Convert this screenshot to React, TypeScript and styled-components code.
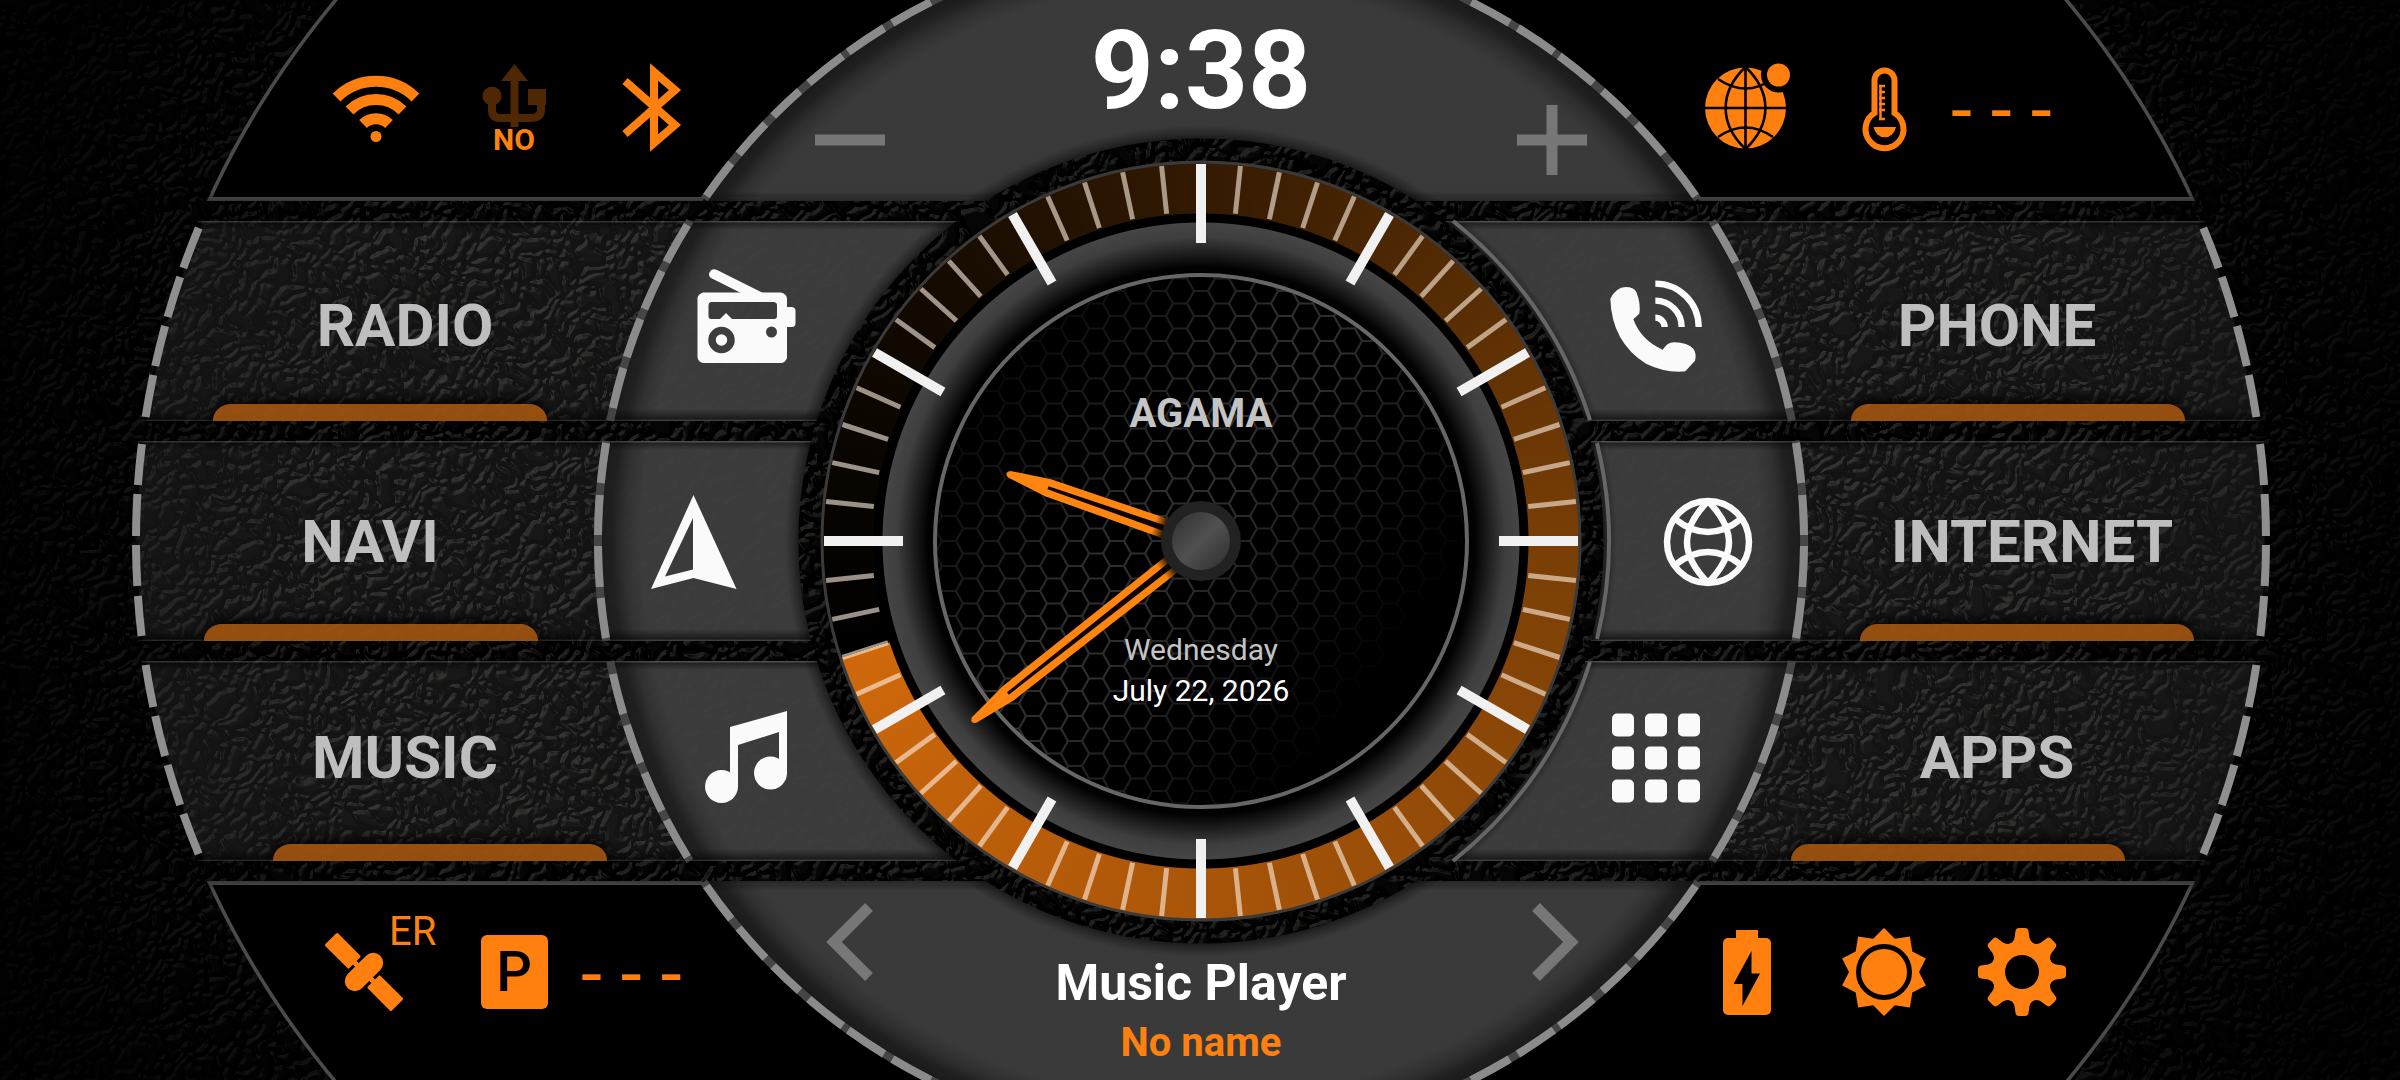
import React from 'react';
import styled, { createGlobalStyle } from 'styled-components';

const ORANGE = '#ff800f';
const SHELL_X = 1069;
const SHELL_Y = 926;
const DISC = 603;

const GlobalStyle = createGlobalStyle`
  * { box-sizing: border-box; }
  body { margin: 0; background: #000; font-family: Roboto, 'Liberation Sans', sans-serif; overflow-x: hidden; }
  button { font: inherit; color: inherit; background: none; border: 0; padding: 0; cursor: pointer; }
  svg { display: block; overflow: visible; }
`;

const Page = styled.main`
  position: relative;
  isolation: isolate;
  overflow: hidden;
  min-height: 100vh;
  padding: 2px 0 0 2px;
  display: grid;
  grid-template-rows: 1fr 200px 200px 200px 1fr;
  grid-template-columns: 100%;
  row-gap: 20px;
`;

const Backdrop = styled.svg`
  position: absolute;
  inset: 0;
  width: 100%;
  height: 100%;
  z-index: -3;
`;

const Vignette = styled.div`
  position: absolute;
  inset: 0;
  z-index: -2;
  background: radial-gradient(1250px 1150px at 50% 50%, transparent 70%, rgba(0, 0, 0, 0.5) 86%, rgba(0, 0, 0, 0.8) 100%);
`;

const Stitching = styled.svg`
  grid-row: 1 / -1;
  grid-column: 1;
  place-self: center;
  pointer-events: none;
`;

/* A horizontal slice of the console; $cy is the console centre measured from the slice's top edge. */
const Band = styled.div<{ $row: number; $cy: string }>`
  grid-row: ${p => p.$row};
  grid-column: 1;
  position: relative;
  &::before {
    content: '';
    position: absolute;
    inset: 0;
    z-index: -1;
    clip-path: ellipse(${SHELL_X}px ${SHELL_Y}px at 50% ${p => p.$cy});
    mask-image: radial-gradient(circle at 50% ${p => p.$cy}, transparent 402px, #000 403px);
  }
`;

const discPaint = (cy: string) => `radial-gradient(circle at 50% ${cy},
  rgba(28, 28, 28, 0.96) 402px, rgba(44, 44, 44, 0.95) 408px, rgba(62, 62, 62, 0.93) 416px,
  rgba(62, 62, 62, 0.93) 560px, rgba(50, 50, 50, 0.94) 576px, rgba(32, 32, 32, 0.95) 589px,
  rgba(27, 27, 27, 0.96) ${DISC}px, transparent ${DISC + 1}px)`;

const StatusBand = styled(Band)<{ $edge: 'top' | 'bottom' }>`
  display: grid;
  grid-template-columns: 368px 1fr 368px;
  padding-inline: calc(50% - 869px);
  &::before {
    top: ${p => (p.$edge === 'bottom' ? '-2px' : 0)};
    background:
      linear-gradient(to ${p => p.$edge}, transparent calc(100% - 10px), rgba(0, 0, 0, 0.4) 100%),
      ${p => discPaint(p.$cy)},
      linear-gradient(to ${p => p.$edge}, transparent calc(100% - 4px), #5a5a5a calc(100% - 4px)),
      radial-gradient(${SHELL_X}px ${SHELL_Y}px at 50% ${p => p.$cy}, #000 99.6%, #4b4b4b 99.7%);
  }
`;

const MenuBand = styled(Band)<{ $reach: number; $label: number; $icon: number }>`
  display: grid;
  grid-template-columns: ${p => p.$label}px ${p => p.$icon}px 1fr ${p => p.$icon}px ${p => p.$label}px;
  padding-inline: calc(50% - ${p => p.$reach}px);
  &::before {
    background:
      linear-gradient(rgba(120, 120, 120, 0.3) 1px, rgba(0, 0, 0, 0.45) 2px, transparent 9px,
        transparent calc(100% - 12px), rgba(0, 0, 0, 0.55) calc(100% - 2px), rgba(110, 110, 110, 0.3) 100%),
      ${p => discPaint(p.$cy)},
      radial-gradient(${SHELL_X}px ${SHELL_Y}px at 50% ${p => p.$cy}, rgba(255, 255, 255, 0.075) 99.4%, transparent 99.6%);
  }
`;

const Cluster = styled.div<{ $top: number }>`
  display: flex;
  align-items: flex-start;
  gap: 50px;
  padding-top: ${p => p.$top}px;
`;

const IconSlot = styled.button`
  position: relative;
  width: 88px;
  height: 88px;
  flex: none;
  display: grid;
  place-items: center;
  color: ${ORANGE};
`;

const Readout = styled.div`
  display: flex;
  align-items: flex-start;
  gap: 23px;
`;

const Dashes = styled.span`
  padding-top: 2px;
  font-size: 76px;
  line-height: 88px;
  white-space: nowrap;
  color: ${ORANGE};
`;

const UsbState = styled.span`
  position: absolute;
  bottom: -4px;
  left: 0;
  width: 100%;
  text-align: center;
  font-size: 30px;
  line-height: 32px;
  font-weight: 700;
`;

const SatCount = styled.span`
  position: absolute;
  left: 57px;
  top: -20px;
  font-size: 40px;
  line-height: 48px;
`;

const ParkBadge = styled.span`
  width: 67px;
  height: 74px;
  border-radius: 6px;
  background: ${ORANGE};
  color: #000;
  font-size: 56px;
  font-weight: 500;
  line-height: 74px;
  text-align: center;
`;

const Hub = styled.div<{ $top: number }>`
  display: grid;
  grid-template-columns: 80px 1fr 80px;
  padding: ${p => p.$top}px 110px 0;
  text-align: center;
`;

const RoundButton = styled.button<{ $drop: number }>`
  width: 80px;
  height: 80px;
  margin-top: ${p => p.$drop}px;
  display: grid;
  place-items: center;
  color: #777;
`;

const Time = styled.time`
  font-size: 110px;
  line-height: 120px;
  font-weight: 700;
  color: #fff;
`;

const Player = styled.div`
  padding-top: 51px;
  line-height: 60px;
  font-weight: 700;
`;

const PlayerTitle = styled.div`
  font-size: 50px;
  color: #fff;
`;

const PlayerTrack = styled.div`
  font-size: 40px;
  color: ${ORANGE};
`;

const MenuButton = styled.button<{ $shift: number }>`
  position: relative;
  display: grid;
  place-items: center;
  padding-top: ${p => Math.max(p.$shift, 0)}px;
  padding-bottom: ${p => Math.max(-p.$shift, 0)}px;
  font-size: 60px;
  line-height: 72px;
  font-weight: 700;
  color: #bebebe;
`;

const Tab = styled.span<{ $side: 'left' | 'right'; $inset: number }>`
  position: absolute;
  bottom: 0;
  ${p => p.$side}: ${p => p.$inset}px;
  width: 334px;
  height: 17px;
  border-radius: 18px 18px 0 0 / 16px 16px 0 0;
  background: rgba(160, 85, 16, 0.92);
  box-shadow: 0 -4px 10px 2px rgba(0, 0, 0, 0.7);
  clip-path: inset(-24px -24px 0 -24px);
`;

const IconButton = styled.button<{ $shift: number }>`
  display: grid;
  place-items: center;
  padding-top: ${p => Math.max(p.$shift, 0)}px;
  padding-bottom: ${p => Math.max(-p.$shift, 0)}px;
  color: #fafafa;
`;

const Dial = styled.section`
  grid-row: 1 / -1;
  grid-column: 1;
  place-self: center;
  width: 760px;
  height: 760px;
  border-radius: 50%;
  display: grid;
  background:
    radial-gradient(circle,
      #000 264px, #020202 274px, #3e3e3e 304px, #454545 318px, #000 319px, #000 327px, transparent 328px),
    conic-gradient(from 252deg, #000 0deg, #130a01 60deg, #331a02 108deg, #7a3f06 200deg, #a95509 288deg, #cf680b 360deg);
`;

const DialArt = styled.svg`
  grid-area: 1 / 1;
  width: 100%;
  height: 100%;
`;

const DialText = styled.div`
  grid-area: 1 / 1;
  display: flex;
  flex-direction: column;
  align-items: center;
  padding: 229px 0 210px;
  color: #c4c4c4;
`;

const Brand = styled.strong`
  font-size: 40px;
  line-height: 48px;
  font-weight: 700;
`;

const Weekday = styled.span`
  margin-top: auto;
  font-size: 30px;
  line-height: 41px;
`;

const Today = styled(Weekday)`
  margin-top: 0;
  color: #fff;
`;

/* ---- leather grain: one seamless tile of irregular cells ---- */

const GRAIN_COLS = 60;
const GRAIN_ROWS = 44;
const GRAIN_W = 8;
const GRAIN_H = 12;

function grainPath() {
  let seed = 7;
  const rand = () => {
    seed = (seed * 16807) % 2147483647;
    return seed / 2147483647 - 0.5;
  };
  const jitter = Array.from({ length: GRAIN_COLS * GRAIN_ROWS }, () => [rand() * 10, rand() * 11, rand()]);
  const at = (r: number, i: number) =>
    jitter[((r + GRAIN_ROWS) % GRAIN_ROWS) * GRAIN_COLS + ((i + GRAIN_COLS) % GRAIN_COLS)];
  const point = (r: number, i: number) => {
    const [dx, dy] = at(r, i);
    const x = i * GRAIN_W + dx;
    const y = r * GRAIN_H + ((i + r) % 2 ? 3 : -3) + dy;
    return `${x.toFixed(1)} ${y.toFixed(1)}`;
  };
  let d = '';
  for (let r = -1; r <= GRAIN_ROWS; r++) {
    for (let i = -1; i <= GRAIN_COLS; i++) {
      if (at(r, i)[2] < 0.36) d += `M${point(r, i)}L${point(r, i + 1)}`;
      if ((i + r) % 2) d += `M${point(r, i)}L${point(r + 1, i)}`;
    }
  }
  return d;
}

const grain = grainPath();

/* ---- stitching ---- */

const onEllipse = (y: number, a: number, b: number) => a * Math.sqrt(1 - (y / b) ** 2);

function arcs(spans: number[][], a: number, b: number) {
  return spans
    .map(([y0, y1]) => {
      const x0 = onEllipse(y0, a, b).toFixed(1);
      const x1 = onEllipse(y1, a, b).toFixed(1);
      return `M${x0} ${y0}A${a} ${b} 0 0 1 ${x1} ${y1}M-${x0} ${y0}A${a} ${b} 0 0 0 -${x1} ${y1}`;
    })
    .join('');
}

const mirror = (spans: number[][]) => [...spans, ...spans.map(([a, b]) => [-b, -a])];

const outerSpans = [...mirror([[-313, -273], [-264, -224], [-215, -175], [-166, -124]]),
  [-97, -56], [-47, -5], [4, 45], [55, 95]];
const innerSpans = [...mirror([[-539, -518], [-513, -489], [-485, -458], [-450, -425], [-417, -387], [-378, -345],
  [-316, -279], [-270, -232], [-222, -184], [-173, -133]]), [-98, -58], [-46, -6], [5, 46], [57, 97]];
const innerBase = [[-544, -342], [-320, -120], [-100, 100], [120, 320], [341, 544]];

/* ---- dial geometry ---- */

const Ticks = () => (
  <g>
    {Array.from({ length: 60 }, (_, i) => {
      const major = i % 5 === 0;
      return (
        <line
          key={i}
          y1={-377}
          y2={major ? -298 : -329}
          stroke={major ? '#f1f1f1' : 'rgba(255,240,225,.6)'}
          strokeWidth={major ? 10 : 5}
          transform={`rotate(${i * 6})`}
        />
      );
    })}
  </g>
);

const Hand = ({ angle, length, slit }: { angle: number; length: number; slit: number }) => (
  <g transform={`rotate(${angle})`}>
    <path
      d={`M-10 -38L-9 -${slit}L-3.500 -${length - 3}Q0 -${length + 3} 3.500 -${length - 3}L9 -${slit}L10 -38Z`}
      fill="url(#handFade)"
    />
    <path d={`M-3 -38L-1.500 -${slit}H1.500L3 -38Z`} fill="#0b0400" />
  </g>
);

/* ---- icons ---- */

const WifiIcon = () => (
  <svg width="88" height="88" viewBox="331 64 88 88" fill="none" stroke="currentColor" strokeWidth="11">
    <path d="M335.500 97.500A56 56 0 0 1 414.500 97.500M348.500 110.500A37.500 37.500 0 0 1 401.500 110.500M362 124A18.500 18.500 0 0 1 388 124" />
    <circle cx="375" cy="136.500" r="5.500" fill="currentColor" stroke="none" />
  </svg>
);

const UsbIcon = () => (
  <svg width="88" height="88" viewBox="470 64 88 88" fill="none" stroke="#4f2703" strokeWidth="8">
    <path d="M514.500 76V127M492 98V110Q492 118 500 118H530Q541 118 541 110V100" />
    <path d="M514.500 64L528 81H501Z" fill="#4f2703" stroke="none" />
    <circle cx="492" cy="96" r="9.500" fill="#4f2703" stroke="none" />
    <path d="M528 89H546V105H528Z" fill="#4f2703" stroke="none" />
  </svg>
);

const BluetoothIcon = () => (
  <svg width="88" height="88" viewBox="607 64 88 88" fill="none" stroke="currentColor" strokeWidth="8">
    <path d="M624 81L674 125L653 143V72L674 90L624 134" />
  </svg>
);

const GlobeFilledIcon = () => (
  <svg width="88" height="88" viewBox="1701 64 88 88">
    <circle cx="1744.500" cy="108" r="40.500" fill="currentColor" />
    <g fill="none" stroke="#000" strokeWidth="2.600">
      <path d="M1744.500 66V150M1703 108H1786M1717 79Q1744.500 98 1772 79M1717 137Q1744.500 118 1772 137" />
      <path d="M1744.500 67C1718 92 1718 124 1744.500 149M1744.500 67C1771 92 1771 124 1744.500 149" />
    </g>
    <circle cx="1777.500" cy="75" r="17.500" fill="#000" />
    <circle cx="1777.500" cy="75" r="11.500" fill="currentColor" />
  </svg>
);

const ThermometerIcon = () => (
  <svg width="88" height="88" viewBox="1839 64 88 88" fill="none" stroke="currentColor">
    <path strokeWidth="6" d="M1873.500 113V80.500A10 10 0 0 1 1893.500 80.500V113A19 19 0 1 1 1873.500 113Z" />
    <path strokeWidth="2.500" d="M1879.500 85V120M1878 86H1884M1878 92H1884M1878 98H1884M1878 104H1884M1878 110H1884M1878 119H1884" />
    <path fill="currentColor" stroke="none" d="M1872.500 127H1895A11.500 13 0 0 1 1872.500 127Z" />
  </svg>
);

const SatelliteIcon = () => (
  <svg width="88" height="88" viewBox="-56 -49 88 88" fill="currentColor">
    <g transform="translate(-24 -5) rotate(45)">
      <rect x="-47" y="-9" width="34" height="18" rx="1.500" />
      <rect x="13" y="-9" width="34" height="18" rx="1.500" />
      <rect x="-13.500" y="-2.500" width="27" height="5" />
      <rect x="-10" y="-23" width="20" height="46" rx="10" />
    </g>
  </svg>
);

const BatteryIcon = () => (
  <svg width="88" height="88" viewBox="1701 928 88 88" fill="currentColor">
    <rect x="1722" y="938" width="48" height="77" rx="5" />
    <rect x="1735" y="930" width="22" height="12" />
    <path fill="#000" d="M1750.500 951L1732.500 984H1741.500V1006L1759 973.500H1750.500Z" />
  </svg>
);

const polar = (r: number, deg: number) => {
  const t = (deg * Math.PI) / 180;
  return `${(r * Math.sin(t)).toFixed(2)} ${(-r * Math.cos(t)).toFixed(2)}`;
};

const sunPath =
  'M' + Array.from({ length: 10 }, (_, i) => `${polar(44, i * 36)}L${polar(35, i * 36 + 18)}`).join('L') + 'Z';

const SunIcon = () => (
  <svg width="88" height="88" viewBox="-44 -44 88 88" fill="currentColor">
    <path d={sunPath} />
    <circle r="25.500" fill="none" stroke="#000" strokeWidth="5" />
  </svg>
);

const GearIcon = () => (
  <svg width="88" height="88" viewBox="-44 -44 88 88" fill="currentColor">
    <path
      fillRule="evenodd"
      d="M31 0A31 31 0 1 1 -31 0A31 31 0 1 1 31 0ZM17 0A17 17 0 1 0 -17 0A17 17 0 1 0 17 0Z"
    />
    {Array.from({ length: 8 }, (_, i) => (
      <path key={i} transform={`rotate(${i * 45})`} d="M-13 -27Q-8.500 -30 -7.500 -34L-6.500 -41Q-6 -44 -3 -44H3Q6 -44 6.500 -41L7.500 -34Q8.500 -30 13 -27Z" />
    ))}
  </svg>
);

const RadioIcon = () => (
  <svg width="108" height="108" viewBox="-5 -4 108 108" fill="currentColor">
    <path d="M20 -6L68 18H46L14 2Q11 0 12.500 -3.500Q15 -8.500 20 -6Z" />
    <path
      fillRule="evenodd"
      d="M6 16.500H84Q90 18 90 23V82Q88 87 84 87H6Q1 86 0.500 81V22Q1 18 6 16.500ZM14 26Q11.500 26.500 11.500 29V40Q11.500 43 14 43H23L29 37L35 43H77Q80 43 80 40V29Q80 26.500 77 26Z"
    />
    <path d="M89 31H95Q98.500 31.500 98.500 35V47Q98.500 51 95 51H89Z" />
    <circle cx="24.500" cy="64" r="9.500" fill="none" stroke="#3d3d3d" strokeWidth="7.500" />
    <circle cx="74.500" cy="56" r="5.500" fill="#3d3d3d" />
  </svg>
);

const NaviIcon = () => (
  <svg width="108" height="108" viewBox="640 486 108 108" fill="currentColor">
    <path
      fillRule="evenodd"
      d="M693.500 493L736.500 587L693.500 576L651 587ZM693 516L665 574.500L693 567.500Z"
    />
  </svg>
);

const NotesIcon = () => (
  <svg width="108" height="108" viewBox="692 703 108 108" fill="currentColor">
    <path d="M730 726L787 710V773H779V731L738 744V786H730Z" />
    <circle cx="721.500" cy="785.500" r="16.500" />
    <circle cx="770.500" cy="772" r="16.500" />
  </svg>
);

const PhoneIcon = () => (
  <svg width="108" height="108" viewBox="33 270 324 324" fill="currentColor">
    <path d="M58 350Q75 316 104 315Q128 315 136 330Q150 365 145 395L127 412Q150 475 215 503Q230 480 250 481Q290 482 307 500Q318 515 312 536L283 568Q225 574 165 545Q62 480 58 350Z" />
    <g fill="none" stroke="currentColor" strokeWidth="19">
      <path d="M193 407A28 28 0 0 1 221 435M193 356A79 79 0 0 1 272 435M193 305A130 130 0 0 1 323 435" />
    </g>
  </svg>
);

const GlobeIcon = () => (
  <svg width="108" height="108" viewBox="-54 -54 108 108" fill="none" stroke="currentColor" strokeWidth="6.500">
    <circle r="41" />
    <path d="M0 -41C-28 -12 -28 12 0 41M0 -41C28 -12 28 12 0 41M-33 -23Q0 3 33 -23M-33 23Q0 -3 33 23" />
  </svg>
);

const AppsIcon = () => (
  <svg width="108" height="108" viewBox="-54 -54 108 108" fill="currentColor">
    {[-33, 0, 33].map(y => [-33, 0, 33].map(x => (
      <rect key={`${x}${y}`} x={x - 11} y={y - 11.500} width="22" height="23" rx="5" />
    )))}
  </svg>
);

const Glyph = ({ d }: { d: string }) => (
  <svg width="80" height="80" viewBox="-40 -40 80 80" fill="none" stroke="currentColor" strokeWidth="11">
    <path d={d} />
  </svg>
);

/* ---- data ---- */

type Item = { label: string; icon: React.ReactNode };
type Row = { left: Item; right: Item; cy: string; reach: number; label: number; icon: number; tab: number; shift: number };

const rows: Row[] = [
  { left: { label: 'RADIO', icon: <RadioIcon /> }, right: { label: 'PHONE', icon: <PhoneIcon /> },
    cy: '320px', reach: 1026, label: 460, icon: 222, tab: 38, shift: 10 },
  { left: { label: 'NAVI', icon: <NaviIcon /> }, right: { label: 'INTERNET', icon: <GlobeIcon /> },
    cy: '100px', reach: 1068, label: 474, icon: 174, tab: 71, shift: 2 },
  { left: { label: 'MUSIC', icon: <NotesIcon /> }, right: { label: 'APPS', icon: <AppsIcon /> },
    cy: '-120px', reach: 1026, label: 460, icon: 222, tab: 98, shift: -6 },
];

export default function App() {
  return (
    <>
      <GlobalStyle />
      <Page>
        <Backdrop aria-hidden="true">
          <defs>
            <pattern id="grain" width={GRAIN_COLS * GRAIN_W} height={GRAIN_ROWS * GRAIN_H} patternUnits="userSpaceOnUse">
              <path d={grain} fill="none" stroke="#fff" strokeWidth="2.500" strokeLinecap="round" />
            </pattern>
            <filter id="leather" x="0" y="0" width="100%" height="100%" colorInterpolationFilters="sRGB">
              <feTurbulence type="fractalNoise" baseFrequency="0.025" numOctaves="3" seed="5" result="noise" />
              <feDisplacementMap in="SourceGraphic" in2="noise" scale="38" xChannelSelector="R" yChannelSelector="G" />
              <feGaussianBlur stdDeviation="1.300" result="creases" />
              <feComposite in="creases" in2="noise" operator="arithmetic" k1="1.900" k2="0" k3="0" k4="0" />
              <feDiffuseLighting surfaceScale="-3.500" diffuseConstant="1" lightingColor="#fff">
                <feDistantLight azimuth="235" elevation="45" />
              </feDiffuseLighting>
              <feColorMatrix values="0.42 0 0 0 -0.275  0.42 0 0 0 -0.275  0.42 0 0 0 -0.278  0 0 0 0 1" />
            </filter>
          </defs>
          <rect width="100%" height="100%" fill="url(#grain)" filter="url(#leather)" />
        </Backdrop>
        <Vignette />

        <StatusBand as="header" $row={1} $cy="calc(100% + 340px)" $edge="bottom">
          <Cluster $top={62}>
            <IconSlot aria-label="Wi-Fi"><WifiIcon /></IconSlot>
            <IconSlot><UsbIcon /><UsbState>NO</UsbState></IconSlot>
            <IconSlot aria-label="Bluetooth"><BluetoothIcon /></IconSlot>
          </Cluster>
          <Hub $top={9}>
            <RoundButton $drop={89} aria-label="Volume down"><Glyph d="M-35 0H35" /></RoundButton>
            <Time>9:38</Time>
            <RoundButton $drop={89} aria-label="Volume up"><Glyph d="M-35 0H35M0 -35V35" /></RoundButton>
          </Hub>
          <Cluster $top={62}>
            <IconSlot aria-label="Network"><GlobeFilledIcon /></IconSlot>
            <Readout>
              <IconSlot aria-label="Temperature"><ThermometerIcon /></IconSlot>
              <Dashes>- - -</Dashes>
            </Readout>
          </Cluster>
        </StatusBand>

        {rows.map((r, i) => (
          <MenuBand as="nav" key={r.left.label} $row={i + 2} $cy={r.cy} $reach={r.reach} $label={r.label} $icon={r.icon}>
            <MenuButton $shift={r.shift}>{r.left.label}<Tab $side="left" $inset={r.tab} /></MenuButton>
            <IconButton $shift={r.shift} aria-label={r.left.label}>{r.left.icon}</IconButton>
            <span />
            <IconButton $shift={r.shift} aria-label={r.right.label}>{r.right.icon}</IconButton>
            <MenuButton $shift={r.shift}>{r.right.label}<Tab $side="right" $inset={r.tab + 4} /></MenuButton>
          </MenuBand>
        ))}

        <StatusBand as="footer" $row={5} $cy="-340px" $edge="top">
          <Cluster $top={47}>
            <IconSlot><SatelliteIcon /><SatCount>ER</SatCount></IconSlot>
            <Readout>
              <IconSlot><ParkBadge>P</ParkBadge></IconSlot>
              <Dashes>- - -</Dashes>
            </Readout>
          </Cluster>
          <Hub $top={21}>
            <RoundButton $drop={0} aria-label="Previous"><Glyph d="M19 -35L-16 0L19 35" /></RoundButton>
            <Player>
              <PlayerTitle>Music Player</PlayerTitle>
              <PlayerTrack>No name</PlayerTrack>
            </Player>
            <RoundButton $drop={0} aria-label="Next"><Glyph d="M-16 -35L19 0L-16 35" /></RoundButton>
          </Hub>
          <Cluster $top={47}>
            <IconSlot aria-label="Battery"><BatteryIcon /></IconSlot>
            <IconSlot aria-label="Brightness"><SunIcon /></IconSlot>
            <IconSlot aria-label="Settings"><GearIcon /></IconSlot>
          </Cluster>
        </StatusBand>

        <Stitching aria-hidden="true" width="2160" height="1078" viewBox="-1080 -539 2160 1078" fill="none">
          <path d={arcs(innerBase, DISC, DISC)} stroke="#454545" strokeWidth="8" />
          <path d={arcs(innerSpans, DISC, DISC)} stroke="#8b8b8b" strokeWidth="8" />
          <path d={arcs(outerSpans, SHELL_X - 4, SHELL_Y)} stroke="#8f8f8f" strokeWidth="8" />
          <path
            d="M252 -320A408 408 0 0 1 389 -121M396 -98A408 408 0 0 1 396 98M389 121A408 408 0 0 1 252 320"
            stroke="#666"
            strokeWidth="4"
          />
        </Stitching>

        <Dial>
          <DialArt viewBox="-380 -380 760 760" aria-hidden="true">
            <defs>
              <pattern id="hex" width="42" height="25" patternUnits="userSpaceOnUse" x="-21" y="0">
                <path d="M0 12.500H7L14 0H28L35 12.500H42M7 12.500L14 25H28L35 12.500" fill="none" stroke="#3e3e3e" strokeWidth="2.200" />
              </pattern>
              <linearGradient id="hexLight" x1="0" y1="0" x2="1" y2="0.750">
                <stop offset="0.100" stopColor="#000" />
                <stop offset="0.450" stopColor="#bbb" />
                <stop offset="0.550" stopColor="#bbb" />
                <stop offset="0.900" stopColor="#000" />
              </linearGradient>
              <mask id="hexMask"><circle r="264" fill="url(#hexLight)" /></mask>
              <linearGradient id="hub" x1="0" y1="0" x2="1" y2="1">
                <stop offset="0.100" stopColor="#353535" />
                <stop offset="0.500" stopColor="#505050" />
                <stop offset="0.900" stopColor="#343434" />
              </linearGradient>
              <linearGradient id="handFade" gradientUnits="userSpaceOnUse" x1="0" y1="-38" x2="0" y2="-50">
                <stop offset="0" stopColor="#2a1500" />
                <stop offset="1" stopColor="#ff8410" />
              </linearGradient>
            </defs>
            <circle r="379" fill="none" stroke="#3a3a3a" strokeWidth="3" />
            <circle r="264" fill="url(#hex)" mask="url(#hexMask)" />
            <circle r="266" fill="none" stroke="#666" strokeWidth="4" />
            <Ticks />
            <Hand angle={289.2} length={206} slit={162} />
            <Hand angle={231.7} length={292} slit={246} />
            <circle r="40" fill="#222" />
            <circle r="29" fill="url(#hub)" />
          </DialArt>
          <DialText>
            <Brand>AGAMA</Brand>
            <Weekday>Wednesday</Weekday>
            <Today>July 22, 2026</Today>
          </DialText>
        </Dial>
      </Page>
    </>
  );
}
